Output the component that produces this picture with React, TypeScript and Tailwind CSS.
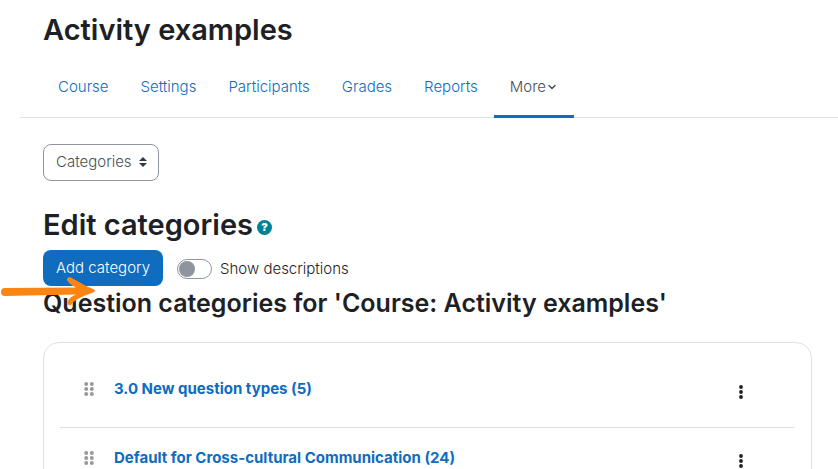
import { ChevronDown } from "lucide-react";

type Category = { id: number; name: string; count: number };

const TABS = ["Course", "Settings", "Participants", "Grades", "Reports"];

const CATEGORIES: Category[] = [
  { id: 1, name: "3.0 New question types", count: 5 },
  { id: 2, name: "Default for Cross-cultural Communication", count: 24 },
];

function CourseTabs() {
  return (
    <nav className="ml-5 flex border-b border-[#dee2e6] pl-[22px] leading-6">
      {TABS.map((t) => (
        <a key={t} href="#" className="-mb-px px-4 pt-[18px] pb-[19px] text-[#0f6cbf]">
          {t}
        </a>
      ))}
      <button
        type="button"
        className="-mb-px flex items-center border-b-3 border-[#0f6cbf] px-4 pt-[18px] pb-4 text-[#495057]"
      >
        More
        <ChevronDown className="size-3" strokeWidth={3} />
      </button>
    </nav>
  );
}

function SectionSelect() {
  return (
    <div className="relative flex w-fit">
      <select
        aria-label="Question bank section"
        className="h-[37px] appearance-none rounded-lg border border-[#8f959e] bg-white pr-[26px] pl-3 text-[#495057]"
      >
        <option>Categories</option>
      </select>
      <svg
        viewBox="0 0 8 10"
        className="pointer-events-none absolute top-[13px] right-3 h-2.5 w-2"
        fill="#343a40"
      >
        <path d="M4 0 8 4H0zM4 10 0 6h8z" />
      </svg>
    </div>
  );
}

// Six dots in two columns, the handle for dragging a category.
function DragHandle() {
  return (
    <svg viewBox="0 0 10 14" className="h-3.5 w-2.5" fill="#999">
      {[2, 7, 12].map((y) => (
        <g key={y}>
          <circle cx="2.2" cy={y} r="2" />
          <circle cx="7.8" cy={y} r="2" />
        </g>
      ))}
    </svg>
  );
}

function CategoryRow({ category }: { category: Category }) {
  return (
    <li className="flex items-start border-b border-[#dee2e6] pt-[18px] pr-[52px] pb-5 pl-6 last:border-b-0">
      <button type="button" aria-label="Move" className="flex h-6 shrink-0 items-center">
        <DragHandle />
      </button>
      <a href="#" className="ml-5 flex-1 leading-6 font-bold text-[#0f6cbf]">
        {category.name} ({category.count})
      </a>
      <button type="button" aria-label="Actions" className="flex h-[30px] shrink-0 items-center">
        <svg viewBox="0 0 4 14" className="h-3.5 w-1" fill="#1d2125">
          <circle cx="2" cy="2" r="1.9" />
          <circle cx="2" cy="7" r="1.9" />
          <circle cx="2" cy="12" r="1.9" />
        </svg>
      </button>
    </li>
  );
}

// Hand-drawn pointer that lies over the page and points at the add button.
function Arrow() {
  return (
    <svg
      viewBox="0 0 96 30"
      className="pointer-events-none absolute top-[277px] left-0 h-[30px] w-24"
      aria-hidden="true"
    >
      <path
        d="M5 11Q1 11 1 15Q1 19 5 19L76 17.500Q69 20 67.500 25Q67 29 71 28Q74 23 85 18.500L93 15.500Q97 13.500 93 12L86 9Q79 5 71 .6Q67 -.5 67 3Q69 7 76 10.500Z"
        fill="#fb8413"
      />
    </svg>
  );
}

export default function App() {
  return (
    <div className="relative bg-white font-['Inter',sans-serif] text-[15px] font-light text-[#1d2125]">
      <h1 className="px-[43px] pt-3 text-[29px] leading-9 font-semibold">Activity examples</h1>
      <div className="pt-[9px]">
        <CourseTabs />
      </div>
      <main className="pt-[26px] pr-[26px] pl-[43px]">
        <SectionSelect />
        <div className="mt-[26px] flex items-center">
          <h2 className="text-[29px] leading-9 font-semibold">Edit categories</h2>
          <button
            type="button"
            aria-label="Help"
            className="mt-1 ml-1 flex size-[15px] items-center justify-center rounded-full bg-[#008196] text-[11px] leading-none font-black text-white"
          >
            ?
          </button>
        </div>
        <div className="mt-[7px] flex items-center">
          <button type="button" className="h-9 rounded-lg bg-[#0f6cbf] px-[13px] text-white">
            Add category
          </button>
          <label className="ml-3.5 flex items-center gap-2 pt-0.5 leading-6">
            <input
              type="checkbox"
              role="switch"
              className="flex h-5 w-[35px] appearance-none items-center rounded-full border border-[#8f959e] bg-white pl-px before:size-4 before:rounded-full before:bg-[#8f959e] checked:justify-end"
            />
            Show descriptions
          </label>
        </div>
        <h3 className="text-[25px] leading-[34px] font-semibold">
          Question categories for 'Course: Activity examples'
        </h3>
        <ul className="mt-[22px] rounded-2xl border border-[#dee2e6] p-4">
          {CATEGORIES.map((c) => (
            <CategoryRow key={c.id} category={c} />
          ))}
        </ul>
      </main>
      <Arrow />
    </div>
  );
}
